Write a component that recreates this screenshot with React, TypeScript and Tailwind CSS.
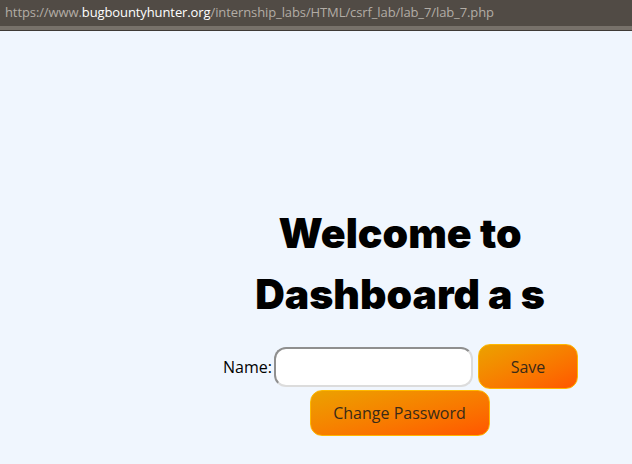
import React from 'react';

export default function App() {
  return (
    <div className="w-[632px] h-[464px] flex flex-col bg-[#f0f6fe] overflow-hidden">
      <div className="h-[26px] bg-[#514b45] flex items-center pl-[5px] text-[13px] text-[#b3ada6] font-['Open_Sans',sans-serif] tracking-[-0.1px]">
        <span>https://www.</span>
        <span className="text-white">bugbountyhunter.org</span>
        <span>/internship_labs/HTML/csrf_lab/lab_7/lab_7.php</span>
      </div>
      <div className="h-[4px] bg-[#77716a]" />
      <div className="h-[1px] bg-[#3e3a36]" />
      <div className="flex-1 pl-[168px] flex flex-col items-center pt-[172px]">
        <h1 className="text-center font-['Inter',sans-serif] font-black text-[41px] leading-[61px] text-black">
          Welcome to
          <br />
          Dashboard a s
        </h1>
        <div className="flex items-center mt-[19px] font-['Open_Sans',sans-serif] ml-[1px]">
          <label className="text-[16px] text-black mr-[2px]">Name:</label>
          <input
            type="text"
            className="w-[199px] h-[40px] rounded-[12px] bg-white border-2 border-t-[#8f8f8f] border-l-[#8f8f8f] border-r-[#dcdcdc] border-b-[#dcdcdc] outline-none"
          />
          <button className="ml-[5px] w-[100px] h-[45px] rounded-[12px] border border-[#ffb800] bg-gradient-to-br from-[#eba100] to-[#ff5500] text-[16px] text-[#3a2a18]">
            Save
          </button>
        </div>
        <button className="mt-[1px] ml-[-1px] w-[180px] h-[46px] rounded-[12px] border border-[#ffb800] bg-gradient-to-br from-[#eba100] to-[#ff5500] text-[16px] text-[#3a2a18] font-['Open_Sans',sans-serif]">
          Change Password
        </button>
      </div>
    </div>
  );
}
